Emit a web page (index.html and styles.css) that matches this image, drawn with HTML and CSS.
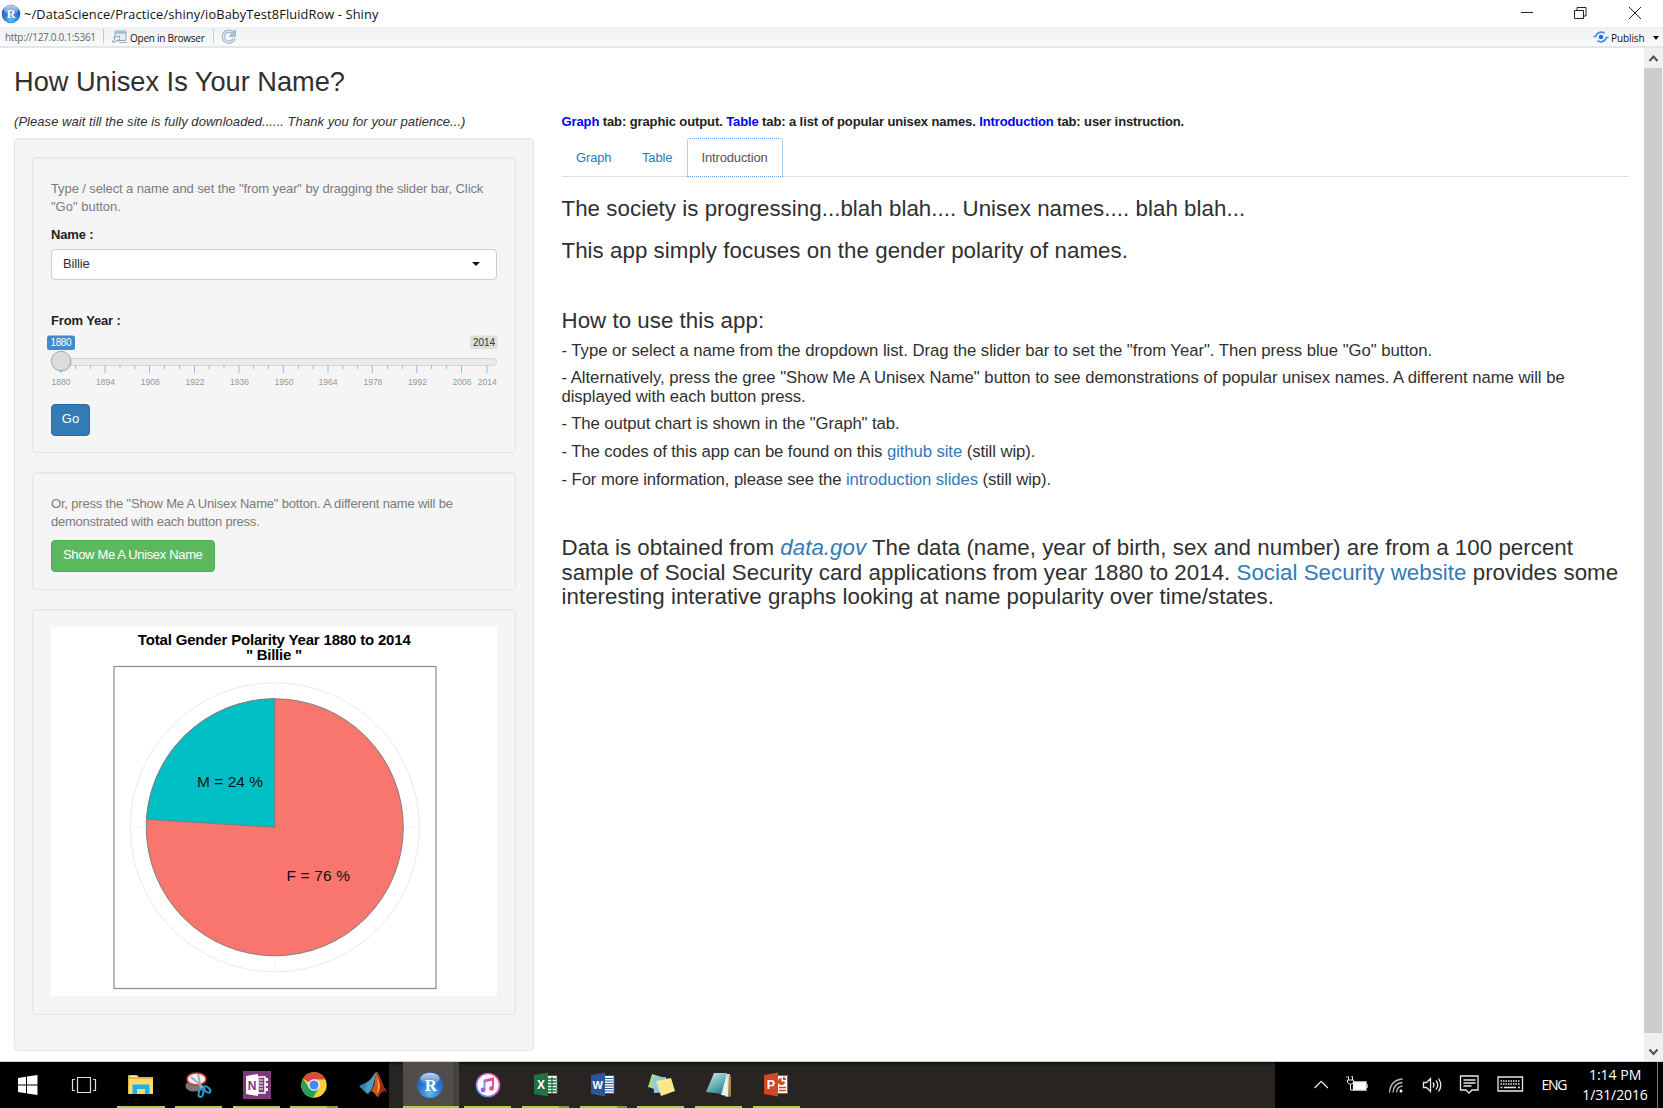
FILE: index.html
```html
<!DOCTYPE html>
<html lang="en">
<head>
<meta charset="utf-8">
<title>~/DataScience/Practice/shiny/ioBabyTest8FluidRow - Shiny</title>
<link rel="stylesheet" href="styles.css">
</head>
<body>
<header class="titlebar">
  <svg class="app-icon" width="20" height="20" viewBox="0 0 20 20"><defs><radialGradient id="rb" cx=".5" cy=".8" r=".8"><stop offset="0" stop-color="#5fc0f5"/><stop offset=".5" stop-color="#2a78d0"/><stop offset="1" stop-color="#2a55b0"/></radialGradient><linearGradient id="gl" x1="0" y1="0" x2="0" y2="1"><stop offset="0" stop-color="#fff" stop-opacity=".75"/><stop offset="1" stop-color="#fff" stop-opacity=".1"/></linearGradient></defs><circle cx="10" cy="10" r="9.3" fill="url(#rb)"/><ellipse cx="10" cy="6" rx="7.2" ry="4.8" fill="url(#gl)"/><text x="10" y="14.3" text-anchor="middle" class="r-letter" font-size="12">R</text></svg>
  <span class="title">~/DataScience/Practice/shiny/ioBabyTest8FluidRow - Shiny</span>
  <svg class="winctl" width="140" height="27" viewBox="0 0 140 27" fill="none" stroke="#222" stroke-width="1"><path d="M5 12.5h12"/><path d="M58.5 10.500h9v8h-9zM61 10.500v-3h9v8.500h-2.500"/><path d="M113 7l12 12M125 7l-12 12"/></svg>
</header>
<div class="toolbar">
  <span class="url">http://127.0.0.1:5361</span>
  <i class="sep"></i>
  <svg class="open-icon" width="17" height="14" viewBox="0 0 17 14"><rect x="4" y="1" width="11" height="9.500" rx="1" fill="#e4eef8" stroke="#8fa5bb"/><path d="M4 2.500h11" stroke="#9bb6d1" stroke-width="2"/><path d="M1 12l3-3-1.500-1.500 6-1.500-.5 5-1.500-1-2.500 2z" fill="#f5f8fa" stroke="#8496a6" stroke-width=".9"/><path d="M8 12.500h8" stroke="#a7b4c0"/></svg>
  <span class="tool-text open">Open in Browser</span>
  <i class="sep sep2"></i>
  <svg class="reload" width="16" height="16" viewBox="0 0 16 16" fill="none"><path d="M12.300 4.500A5.500 5.500 0 1 0 13 9.500" stroke="#a3b4c6" stroke-width="3.400"/><path d="M12.300 4.500A5.500 5.500 0 1 0 13 9.500" stroke="#dfe8f1" stroke-width="1.200"/><path d="M14.500 1v6.500H8.500z" fill="#b4c3d3" stroke="#93a6ba" stroke-width=".7"/></svg>
  <svg class="publish-icon" width="16" height="12" viewBox="0 0 16 12" fill="none" stroke="#4f8ddb" stroke-width="1.700"><path d="M.5 5.500h2.200C4 1 9 .2 11.500 2.300"/><path d="M15.500 6.500h-2.200C12 11 7 11.800 4.500 9.700"/><circle cx="8" cy="6" r="2.300" fill="#1d6fdc" stroke="none"/></svg>
  <span class="tool-text pub">Publish</span>
  <i class="caret"></i>
</div>
<div class="viewport">
  <main class="page">
    <section class="left">
      <h2>How Unisex Is Your Name?</h2>
      <p class="wait"><em>(Please wait till the site is fully downloaded...... Thank you for your patience...)</em></p>
      <div class="well outer">
        <div class="well w1">
          <p class="help"><span class="h1a">Type / select a name and set the "from year" by dragging the slider bar, Click</span><br>"Go" button.</p>
          <label class="lab">Name :</label>
          <div class="select"><span>Billie</span><i class="caret big"></i></div>
          <label class="lab from">From Year :</label>
          <svg class="slider" width="456" height="58" viewBox="46 334 456 58">
            <rect x="51.500" y="358.500" width="445" height="7" rx="3.500" fill="#eaeaea" stroke="#d6d6d6"/>
            <path d="M75.500 365v4M90.500 365v4M120 365v4M135 365v4M164.500 365v4M179.500 365v4M209 365v4M224 365v4M253.500 365v4M268.500 365v4M298.500 365v4M313 365v4M343 365v4M357.500 365v4M387.500 365v4M402.500 365v4M431.500 365v4M446.500 365v4" stroke="#bbb"/>
            <path d="M60.500 365v8M105 365v8M149.500 365v8M194.500 365v8M239 365v8M283.300 365v8M328 365v8M372.300 365v8M416.800 365v8M461.500 365v8M487 365v8" stroke="#8fbce6"/>
            <g class="ticks" fill="#999" font-size="8.600" text-anchor="middle"><text x="61" y="385.200">1880</text><text x="105.500" y="385.200">1894</text><text x="150.200" y="385.200">1908</text><text x="195" y="385.200">1922</text><text x="239.500" y="385.200">1936</text><text x="284" y="385.200">1950</text><text x="328" y="385.200">1964</text><text x="373" y="385.200">1978</text><text x="417.500" y="385.200">1992</text><text x="462" y="385.200">2006</text><text x="487.300" y="385.200">2014</text></g>
            <rect x="47" y="335.500" width="28" height="14.500" rx="2.500" fill="#428bca"/><text x="61" y="346" text-anchor="middle" font-size="10" fill="#fff" textLength="21">1880</text>
            <rect x="470" y="335.500" width="27.500" height="13.500" rx="2.500" fill="#dedede"/><text x="484" y="346" text-anchor="middle" font-size="10" fill="#333" textLength="22">2014</text>
            <circle cx="61.800" cy="362.200" r="10" fill="#000" opacity=".12"/><circle cx="61" cy="361" r="9.700" fill="#dcdcdc" stroke="#aaa"/>
          </svg>
          <button class="btn go">Go</button>
        </div>
        <div class="well w2">
          <p class="help"><span class="h2a">Or, press the "Show Me A Unisex Name" botton. A different name will be</span><br><span class="h2b">demonstrated with each button press.</span></p>
          <button class="btn show">Show Me A Unisex Name</button>
        </div>
        <div class="well w3">
          <svg class="plot" width="446" height="369" viewBox="51 627 446 369">
            <rect x="51" y="627" width="446" height="369" fill="#fff"/>
            <g font-weight="bold" font-size="15" text-anchor="middle"><text x="274.300" y="644.500" textLength="273">Total Gender Polarity Year 1880 to 2014</text><text x="274" y="660.300" textLength="56">" Billie "</text></g>
            <rect x="114" y="666.500" width="322" height="322" fill="none" stroke="#8c8c8c" stroke-width="1.200"/>
            <circle cx="274.800" cy="827.300" r="144.500" fill="none" stroke="#ebebeb"/>
            <path d="M274.800 683v289M130.300 827.300h289M172.600 725.100l204.400 204.400M377 725.100L172.600 929.500" stroke="#f4f4f4"/>
            <circle cx="274.800" cy="827.300" r="128.500" fill="#f8766d" stroke="#7f7f7f"/>
            <path d="M274.800 827.300V698.800A128.500 128.500 0 0 0 146.600 819.300Z" fill="#00bfc4" stroke="#7f7f7f"/>
            <g font-size="15.500" fill="#111"><text x="197" y="787.400" textLength="66">M = 24 %</text><text x="286.500" y="881.200" textLength="63.500">F = 76 %</text></g>
          </svg>
        </div>
      </div>
    </section>
    <section class="right">
      <p class="tabs-note"><b>Graph</b> tab: graphic output. <b>Table</b> tab: a list of popular unisex names. <b>Introduction</b> tab: user instruction.</p>
      <nav class="tabs"><a>Graph</a><a>Table</a><a class="active">Introduction</a></nav>
      <h3 class="s1"><span>The society is progressing...blah blah.... Unisex names.... blah blah...</span></h3>
      <h3 class="s2"><span>This app simply focuses on the gender polarity of names.</span></h3>
      <h3 class="s3"><span>How to use this app:</span></h3>
      <h4 class="step-long">- Type or select a name from the dropdown list. Drag the slider bar to set the "from Year". Then press blue "Go" button.</h4>
      <h4><span class="step-long">- Alternatively, press the gree "Show Me A Unisex Name" button to see demonstrations of popular unisex names. A different name will be</span><br>displayed with each button press.</h4>
      <h4>- The output chart is shown in the "Graph" tab.</h4>
      <h4>- The codes of this app can be found on this <a>github site</a> (still wip).</h4>
      <h4>- For more information, please see the <a>introduction slides</a> (still wip).</h4>
      <h3 class="s4"><span>Data is obtained from <a><em>data.gov</em></a> The data (name, year of birth, sex and number) are from a 100 percent</span><br><span>sample of Social Security card applications from year 1880 to 2014. <a>Social Security website</a> provides some</span><br><span>interesting interative graphs looking at name popularity over time/states.</span></h3>
    </section>
  </main>
  <aside class="scroll">
    <svg width="19" height="20" viewBox="0 0 19 20" fill="none" stroke="#505050" stroke-width="2"><path d="M5.500 13l4-4.500 4 4.500"/></svg>
    <div class="thumb"></div>
    <svg width="19" height="20" viewBox="0 0 19 20" fill="none" stroke="#505050" stroke-width="2"><path d="M5.500 8.500l4 4.500 4-4.500"/></svg>
  </aside>
</div>
<footer class="taskbar">
  <div class="slot start"><svg width="20" height="20" viewBox="0 0 20 20" fill="#fff"><path d="M0 3l8-1.200v7.700H0zM9 1.600L19.500 0v9.500H9zM0 10.500h8v7.700L0 17zM9 10.500h10.500V20L9 18.400z"/></svg></div>
  <div class="slot view"><svg width="26" height="18" viewBox="0 0 26 18" fill="none" stroke="#ddd" stroke-width="1.200"><path d="M6.500 1.500h13v15h-13zM4 3.500H1.500v11H4M22 3.500h2.500v11H22"/></svg></div>
  <div class="slot run"><svg width="26" height="22" viewBox="0 0 26 22"><path d="M0 2q0-1 1-1h8l2 2h14v17H0z" fill="#e8b537"/><path d="M1 5h24v15H1z" fill="#fbdc72"/><path d="M4.500 20v-9.500h17V20h-4.500v-5h-8v5z" fill="#1cb1ec"/><path d="M2 2.500h7" stroke="#fff3bf"/></svg></div>
  <div class="slot run"><svg width="28" height="28" viewBox="0 0 28 28"><ellipse cx="9" cy="15" rx="8.500" ry="5.500" fill="#777"/><ellipse cx="11.500" cy="8" rx="9.500" ry="6" fill="#f4eff0" stroke="#d43b31" stroke-width="1.500"/><path d="M6 6l14 12M13 3l3 15" stroke="#9aa9b6" stroke-width="1.800"/><g fill="none" stroke="#2c9ad5" stroke-width="2"><ellipse cx="16" cy="22" rx="2.300" ry="4" transform="rotate(15 16 22)"/><ellipse cx="22" cy="18.500" rx="2.200" ry="4" transform="rotate(-50 22 18.500)"/></g></svg></div>
  <div class="slot run"><svg width="28" height="28" viewBox="0 0 28 28"><path d="M0 0h28v28H0z" fill="#80397b"/><path d="M15 6h7v16h-7z" fill="none" stroke="#fff" stroke-width="1.500"/><path d="M16 9h4M16 12h4M16 15h4M16 18h4" stroke="#fff"/><path d="M22 7h3v3h-3zM22 12h3v3h-3zM22 17h3v3h-3z" fill="#fff"/><path d="M3 5l12-2v22L3 23z" fill="#fff"/><text x="9" y="18.500" text-anchor="middle" font-size="12" font-weight="bold" fill="#80397b">N</text></svg></div>
  <div class="slot run multi"><svg width="26" height="26" viewBox="-13 -13 26 26"><circle r="12.700" fill="#fbcd3a"/><path d="M0 0L-11-6.350A12.700 12.700 0 0 1 11.500-5.500L0-5.500z" fill="#dc4a3d"/><path d="M-11-6.350A12.700 12.700 0 0 0-1 12.650L5 2.800-5 2.800z" fill="#21a15b"/><circle r="5.800" fill="#fff"/><circle r="4.600" fill="#4688f4"/></svg></div>
  <div class="slot"><svg width="28" height="26" viewBox="0 0 28 26"><path d="M0 14l8-4 6 4-6 8z" fill="#3b7ea8"/><path d="M8 10c5-2 7-10 10-10l-5 17-4 5-3-4z" fill="#4e9ac0"/><path d="M18 0c4 4 5 14 10 20-4-3-6 1-9 5-3-1-4-7-8-5 5-3 5-17 7-20z" fill="#d8541e"/><path d="M18 1c2 8 0 18 1 24 3-4 5-8 9-5C23 14 21 4 18 1z" fill="#9c2715"/><path d="M18 3c1 8 1 14 0 19 5-4 3-12 0-19z" fill="#f6a12d"/></svg></div>
  <div class="apps">
    <div class="slot run active"><svg width="28" height="28" viewBox="0 0 20 20"><circle cx="10" cy="10" r="9.300" fill="url(#rb)"/><ellipse cx="10" cy="5.500" rx="7" ry="4.300" fill="url(#gl)"/><text x="10.500" y="14" text-anchor="middle" class="r-letter" font-size="12">R</text></svg></div>
    <div class="slot run"><svg width="26" height="26" viewBox="0 0 26 26"><defs><linearGradient id="it" x1="1" y1="0" x2="0" y2="1"><stop offset="0" stop-color="#fa4b6a"/><stop offset=".5" stop-color="#c15be0"/><stop offset="1" stop-color="#43b5f5"/></linearGradient></defs><circle cx="13" cy="13" r="11.500" fill="#fff" stroke="url(#it)" stroke-width="1.700"/><path d="M9.500 18V8.500l8.500-2V16M9.500 9.500l8.500-2" fill="none" stroke="url(#it)" stroke-width="2"/><circle cx="8" cy="18" r="2.400" fill="#a45be5"/><circle cx="16.500" cy="16.500" r="2.400" fill="#f1507c"/></svg></div>
    <div class="slot run multi"><svg width="26" height="26" viewBox="0 0 26 26"><path d="M13 3.500h11v18H13z" fill="#fff" stroke="#207245"/><path d="M15 7h8M15 10h8M15 13h8M15 16h8M15 19h8M19 5v16" stroke="#207245" stroke-width="1.300"/><path d="M1 3l14-2.500v24L1 22z" fill="#207245"/><text x="8" y="17" text-anchor="middle" font-size="12" font-weight="bold" fill="#fff">X</text></svg></div>
    <div class="slot run multi"><svg width="26" height="26" viewBox="0 0 26 26"><path d="M13 3.500h11v18H13z" fill="#fff" stroke="#2b579a"/><path d="M15 6.500h8M15 9h8M15 11.500h8M15 14h8M15 16.500h8M15 19h8" stroke="#2b579a"/><path d="M1 3l14-2.500v24L1 22z" fill="#2b579a"/><text x="7.800" y="17" text-anchor="middle" font-size="11" font-weight="bold" fill="#fff">W</text></svg></div>
    <div class="slot run"><svg width="28" height="24" viewBox="0 0 28 24"><path d="M5 1l13 4-4 13L1 14z" fill="#9fdc8c"/><path d="M6 5l13-1 2 15-14 1z" fill="#8fc4f5"/><path d="M9 8l15-3 4 13-14 5z" fill="#fbe88c"/></svg></div>
    <div class="slot run"><svg width="26" height="26" viewBox="0 0 26 26"><defs><linearGradient id="np" x1="0" y1="0" x2=".6" y2="1"><stop offset="0" stop-color="#cfe9ec"/><stop offset=".5" stop-color="#7fbcc6"/><stop offset="1" stop-color="#2f8793"/></linearGradient></defs><path d="M9 2l15 0 1 22-5 1z" fill="#d9dbd6"/><path d="M23 3l2 1v20l-3 1z" fill="#a88642"/><path d="M8 1h13l-5 21L0 20z" fill="url(#np)"/><path d="M21 3l1 21-7-1z" fill="#edf2f2"/></svg></div>
    <div class="slot run"><svg width="26" height="26" viewBox="0 0 26 26"><path d="M13 3.500h11.500v18H13z" fill="#fff" stroke="#d24726"/><path d="M16 15.500h7M16 18.500h7" stroke="#d24726" stroke-width="1.300"/><path d="M18.500 6a3.500 3.500 0 1 0 3.500 3.500h-3.500z" fill="#d24726"/><path d="M20 5v3h3a3 3 0 0 0-3-3z" fill="#d24726"/><path d="M1 3l14-2.500v24L1 22z" fill="#d24726"/><text x="8" y="17.300" text-anchor="middle" font-size="12.500" font-weight="bold" fill="#fff">P</text></svg></div>
  </div>
  <div class="tray">
    <svg width="274" height="46" viewBox="1314 1062 274 46" fill="none" stroke="#e8e8e8" stroke-width="1.300"><path d="M1314.500 1088l6.700-6.700 6.700 6.700"/><path d="M1353.500 1082h12.500v8h-12.500z" fill="#fff"/><path d="M1367 1084v4"/><path d="M1347 1077.500v-1.500M1352 1077.500v-1.500M1348.500 1080v-3.500M1352.500 1080v-3.500M1347.500 1080h6v2.500q-3 3.500-6 0zM1350.500 1084v6h3" stroke-width="1"/><path d="M1389.500 1092.500q1-12.500 13-13.500M1393 1092.500q1-9.500 9.500-10M1396.500 1092.500q.5-6 6-6.500" stroke="#bbb"/><circle cx="1401" cy="1091" r="1.500" fill="#fff" stroke="none"/><path d="M1423.500 1082.500h3l4-4v13l-4-4h-3zM1433 1082.500q2 2.500 0 5M1436 1080.500q3.500 4.500 0 9M1438.500 1078.500q4.500 6.500 0 13"/><path d="M1460.500 1076h17.500v14h-6l-3 3-3-3h-5.500zM1463.500 1080h12M1463.500 1083h12M1463.500 1086h8"/><path d="M1498 1077h24.500v14H1498z"/><path d="M1500.500 1081h20M1500.500 1084h20" stroke-dasharray="1.500 1"/><path d="M1500.500 1087.500h2M1504 1087.500h12M1518 1087.500h2"/><text x="1541.500" y="1090" font-size="14" textLength="26" class="seg" fill="#fff" stroke="none">ENG</text></svg>
    <div class="clock"><span>1:14 PM</span><span class="date">1/31/2016</span></div>
  </div>
</footer>
</body>
</html>
```
FILE: styles.css
```css
* { box-sizing: border-box; }
html, body { height: 1108px; }
body { margin: 0; background: #fff; color: #303030; font: 13px/18.6px "Liberation Sans", Arial, sans-serif; overflow: hidden; display: flex; flex-direction: column; }
h2, h3, h4, p { margin: 0; font-weight: normal; white-space: nowrap; }
svg { display: block; flex: none; }
svg text { font-family: "Liberation Sans", Arial, sans-serif; }
svg .r-letter { font-family: "Liberation Serif", serif; fill: #fff; font-weight: bold; }
svg .seg { font-family: "Open Sans", sans-serif; }

.titlebar { height: 27px; flex: none; display: flex; align-items: center; padding-left: 1px; color: #111; }
.title { margin-left: 3px; font: 12.8px/20px "Open Sans", sans-serif; letter-spacing: .12px; white-space: nowrap; }
.winctl { margin-left: auto; margin-right: 7px; }
.toolbar { height: 21px; flex: none; display: flex; align-items: center; padding-left: 5px; background: linear-gradient(#eff2f4, #f8faf9 85%); border-bottom: 2px solid #e4e6ea; font: 10px/16px "Open Sans", sans-serif; white-space: nowrap; }
.url { width: 91px; color: #666; letter-spacing: -.3px; }
.sep { width: 1px; height: 15px; margin: 0 7px; background: #ccc; }
.sep2 { margin-left: 6px; }
.tool-text { color: #111; padding-top: 2px; letter-spacing: -.1px; }
.open { margin-left: 2px; width: 77px; letter-spacing: -.25px; }
.publish-icon { margin-left: auto; }
.pub { margin-left: 2px; width: 33px; }
.caret { width: 0; height: 0; border: 3px solid transparent; border-top: 4px solid #111; border-bottom: 0; margin: 3px 4px 0 9px; }
.caret.big { border-width: 4.500px 4.500px 0; margin: 0 16px 0 auto; }

.viewport { height: 1014px; flex: none; display: flex; border-bottom: 1px solid #cfcfcf; }
.page { flex: 1; display: flex; padding-left: 14px; }
.left { width: 519.5px; flex: none; }
h2 { margin-top: 19px; font-size: 27.2px; line-height: 30px; }
.wait { margin-top: 14.500px; line-height: 19px; letter-spacing: .05px; }
.well { border: 1px solid #e5e5e5; border-radius: 4px; background: #f5f5f5; box-shadow: inset 0 1px 1px rgba(0,0,0,.04); }
.outer { margin-top: 7.500px; height: 912.5px; padding: 17.500px 16.500px 0 17px; display: flex; flex-direction: column; gap: 19px; }
.w1, .w2, .w3 { padding: 0 17.500px 0 18px; display: flex; flex-direction: column; align-items: flex-start; }
.w1 { height: 296px; }
.w2 { height: 118px; }
.w3 { height: 406px; padding-top: 17px; }
.help { margin-top: 22px; color: #7b7b7b; }
.h1a { letter-spacing: -.108px; }
.h2a { letter-spacing: -.18px; }
.h2b { letter-spacing: -.23px; }
.lab { margin-top: 9px; font-weight: bold; line-height: 18px; color: #222; letter-spacing: -.15px; }
.select { width: 446px; height: 31px; margin-top: 5px; display: flex; align-items: center; padding-left: 11px; background: #fff; border: 1px solid #ccc; border-radius: 4px; letter-spacing: -.15px; }
.from { margin-top: 32.500px; }
.slider { margin: 3.500px 0 0 -5px; }
.btn { height: 31.500px; padding: 0 0 1px; border: 1px solid; border-radius: 4px; color: #fff; font: 13px/18px "Liberation Sans", Arial, sans-serif; white-space: nowrap; }
.go { width: 39px; margin-top: 12.500px; background: #337ab7; border-color: #2e6da4; }
.show { width: 163.500px; margin-top: 8.500px; background: #5cb85c; border-color: #4cae4c; letter-spacing: -.34px; }

.right { margin-left: 28px; width: 1067.500px; flex: none; }
.tabs-note { margin-top: 64.500px; font-weight: bold; line-height: 18px; color: #222; letter-spacing: -.108px; }
.tabs-note b { color: #00f; }
.tabs { margin-top: 7.500px; height: 39px; display: flex; border-bottom: 1px solid #ddd; line-height: 39px; letter-spacing: -.15px; }
.tabs a { padding-left: 14.500px; width: 66px; color: #337ab7; }
.tabs a + a { width: 59.500px; }
.right a { color: #337ab7; }
.tabs a.active { width: 95.500px; height: 39px; line-height: 37px; color: #555; background: #fff; border: 1px dotted #5fa3e6; border-radius: 3px 3px 0 0; padding-left: 13.500px; }
h3 { font-size: 22.3px; line-height: 24.300px; letter-spacing: .03px; }
.s1 { margin-top: 19.500px; letter-spacing: .045px; }
.s2 { margin-top: 18.200px; letter-spacing: .045px; }
.s3 { margin-top: 45.500px; margin-bottom: 8.500px; }
h4 { font-size: 16.7px; line-height: 18.400px; margin-bottom: 9.300px; letter-spacing: -.08px; }
.step-long { letter-spacing: -.025px; }
.s4 { margin-top: 47px; }

.scroll { width: 19px; flex: none; margin-left: auto; background: #f0f0f0; display: flex; flex-direction: column; }
.thumb { flex: none; height: 965px; margin-right: 1px; background: #cdcdcd; }
.scroll svg:last-child { margin-top: auto; }

.taskbar { height: 46px; flex: none; display: flex; background: #000; color: #fff; }
.slot { width: 57.700px; height: 46px; flex: none; display: flex; align-items: center; justify-content: center; position: relative; }
.start { width: 55px; padding-bottom: 1px; }
.view { width: 57.400px; }
.run::after { content: ""; position: absolute; left: 5px; right: 5.500px; bottom: 0; height: 2px; background: #9bd355; }
.multi::after { background: linear-gradient(90deg, #9bd355 78%, #76a043 78%); }
.slot:nth-child(7) { width: 46px; justify-content: flex-end; padding-right: 2px; }
.apps { flex: none; width: 886px; padding-left: 14px; display: flex; background: linear-gradient(#151311, #282421 4px); }
.apps .slot:nth-child(7) { width: 57.700px; justify-content: center; padding: 0; }
.active.slot { background: linear-gradient(90deg, #504d4a 51px, #393633 51px, #393633 52px, #474441 52px); width: 56px; padding-right: 2px; margin-right: 0; }
.active.slot::after { left: 0; right: 0; }
.tray { flex: 1; display: flex; padding-left: 39px; }
.clock { flex: 1; margin-right: 5px; border-right: 1px solid #777; padding-top: 3px; display: flex; flex-direction: column; align-items: center; font: 14px/20px "Open Sans", sans-serif; white-space: nowrap; margin-left: -15px; }
.date { letter-spacing: -.1px; }
```
